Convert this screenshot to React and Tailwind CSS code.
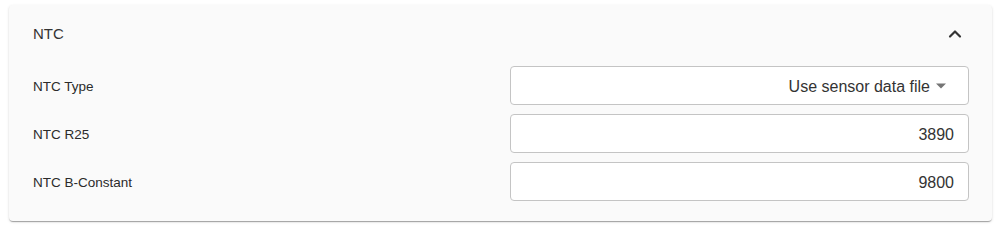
import { ChevronUp } from "lucide-react";

const rows = [
  { label: "NTC Type", value: "Use sensor data file", select: true },
  { label: "NTC R25", value: "3890" },
  { label: "NTC B-Constant", value: "9800" },
];

const Field = ({ value, select }) => (
  <div
    className={`w-[459px] h-[39px] rounded border border-[#c4c4c4] bg-white flex items-center justify-end pt-[2px] text-[16px] text-[#333] ${
      select ? "pr-[22px]" : "pr-[14px]"
    }`}
  >
    <span>{value}</span>
    {select && (
      <svg width="10" height="6" viewBox="0 0 10 5" className="ml-[6px] -mt-[2px]">
        <path d="M0 0h10L5 5z" fill="#757575" />
      </svg>
    )}
  </div>
);

export default function App() {
  return (
    <div className="bg-white w-[1000px] h-[228px] pt-[5px] pl-[9px] pr-[8px] font-['Liberation_Sans',Arial,sans-serif]">
      {/* SETTINGS CARD */}
      <div className="bg-[#fafafa] rounded shadow-[0_2px_1px_-1px_rgba(0,0,0,0.2),0_1px_1px_0_rgba(0,0,0,0.14),0_1px_3px_0_rgba(0,0,0,0.12)] pb-[20px]">
        <div className="h-[58px] flex items-center justify-between pl-[24px] pr-[27px]">
          <span className="text-[15px] text-[#333]">NTC</span>
          <ChevronUp size={20} strokeWidth={2.6} className="text-[#333]" />
        </div>

        <div className="flex flex-col gap-[9px] pt-[3px] pl-[24px] pr-[23px]">
          {rows.map((row) => (
            <div key={row.label} className="flex items-center justify-between">
              <span className="text-[13.5px] text-[#2b2b2b] pt-[3px]">{row.label}</span>
              <Field value={row.value} select={row.select} />
            </div>
          ))}
        </div>
      </div>
    </div>
  );
}
